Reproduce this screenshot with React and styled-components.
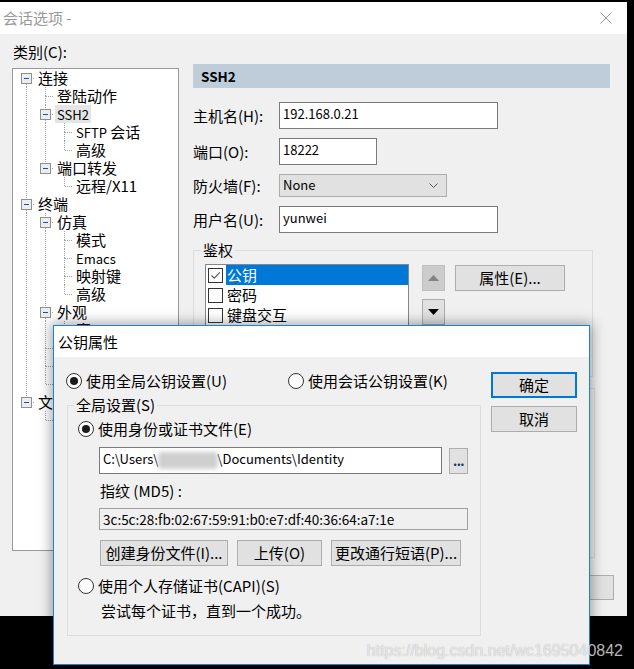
import React from "react";
import styled, { createGlobalStyle } from "styled-components";

const FONT = `"Noto Sans CJK SC", "Noto Sans", sans-serif`;

const GlobalStyle = createGlobalStyle`
  html, body { margin: 0; padding: 0; background: #000; }
  body { font-family: ${FONT}; font-size: 15px; color: #000; }
  * { box-sizing: border-box; }
  button { font-family: ${FONT}; font-size: 15px; color: #000; }
`;

// 左侧类别树（被对话框挡住的节点只留连线）
const TREE = [
  {
    label: "连接",
    children: [
      { label: "登陆动作" },
      { label: "SSH2", latin: true, selected: true, children: [{ label: "SFTP", tail: " 会话" }, { label: "高级" }] },
      { label: "端口转发", children: [{ label: "远程/X11" }] },
    ],
  },
  {
    label: "终端",
    children: [
      {
        label: "仿真",
        children: [{ label: "模式" }, { label: "Emacs", latin: true }, { label: "映射键" }, { label: "高级" }],
      },
      { label: "外观", children: [{ label: "窗口" }] },
      { label: "" },
      { label: "" },
      { label: "" },
    ],
  },
  { label: "文件传输", children: [{ label: "" }] },
];

function flatten(nodes, level = 0, trail = [], out = []) {
  nodes.forEach((n, i) => {
    const last = i === nodes.length - 1;
    out.push({
      ...n,
      level,
      last,
      first: level === 0 && i === 0,
      trail,
      hasKids: !!n.children,
    });
    if (n.children) flatten(n.children, level + 1, [...trail, !last], out);
  });
  return out;
}

const ROWS = flatten(TREE);

const AUTH = [
  { label: "公钥", checked: true, selected: true },
  { label: "密码" },
  { label: "键盘交互" },
];

const DOT = { stroke: "#a0a0a0", strokeDasharray: "1 1" };

function Guide({ through }) {
  return (
    <GuideSvg width="19" height="18">
      {through && <line x1="9.5" y1="0" x2="9.5" y2="18" {...DOT} />}
    </GuideSvg>
  );
}

function Connector({ row }) {
  return (
    <GuideSvg width="19" height="18">
      {!row.first && <line x1="9.5" y1="0" x2="9.5" y2="9" {...DOT} />}
      {!row.last && <line x1="9.5" y1="9" x2="9.5" y2="18" {...DOT} />}
      <line x1="10" y1="9.5" x2="18" y2="9.5" {...DOT} />
      {row.hasKids && (
        <g>
          <rect x="4.5" y="4.5" width="10" height="10" fill="#ededed" stroke="#8f8f8f" />
          <line x1="7" y1="9.5" x2="12" y2="9.5" stroke="#1f4fa3" />
        </g>
      )}
    </GuideSvg>
  );
}

function CloseIcon() {
  return (
    <svg width="12" height="12" viewBox="0 0 12 12">
      <path d="M0.5 0.5 L11.5 11.5 M11.5 0.5 L0.5 11.5" stroke="#9a9a9a" strokeWidth="1" fill="none" />
    </svg>
  );
}

function Radio({ on, children }) {
  return (
    <RadioRow>
      <RadioDot $on={on} />
      <span>{children}</span>
    </RadioRow>
  );
}

export default function App() {
  return (
    <>
      <GlobalStyle />
      <Desktop>
        <Window>
          <TitleBar $h={32} $pl={3} $pr={15}>
            <span>会话选项 -</span>
            <CloseIcon />
          </TitleBar>
          <WindowBody>
            <MainRow>
              <LeftCol>
                <CategoryLabel>类别(C):</CategoryLabel>
                <TreeBox>
                  {ROWS.map((row, i) => (
                    <TreeRow key={i}>
                      {row.trail.map((t, j) => (
                        <Guide key={j} through={t} />
                      ))}
                      <Connector row={row} />
                      <NodeLabel $selected={row.selected}>
                        {row.latin || row.tail ? <Latin>{row.label}</Latin> : row.label}
                        {row.tail}
                      </NodeLabel>
                    </TreeRow>
                  ))}
                </TreeBox>
              </LeftCol>

              <RightCol>
                <SectionHeader>SSH2</SectionHeader>
                <FormGrid>
                  <FieldLabel>主机名(H):</FieldLabel>
                  <TextBox $w={219}><Latin>192.168.0.21</Latin></TextBox>
                  <FieldLabel>端口(O):</FieldLabel>
                  <TextBox $w={98}><Latin>18222</Latin></TextBox>
                  <FieldLabel>防火墙(F):</FieldLabel>
                  <Select>
                    <Latin>None</Latin>
                    <svg width="9" height="5" viewBox="0 0 9 5">
                      <path d="M0.5 0.5 L4.5 4.5 L8.5 0.5" stroke="#555" fill="none" />
                    </svg>
                  </Select>
                  <FieldLabel>用户名(U):</FieldLabel>
                  <TextBox $w={219}><Latin>yunwei</Latin></TextBox>
                </FormGrid>

                <Group $mt={8} $w={400}>
                  <Legend $ml={7}>鉴权</Legend>
                  <AuthBody>
                    <AuthList>
                      {AUTH.map((a) => (
                        <AuthItem key={a.label}>
                          <CheckBox>
                            {a.checked && (
                              <svg width="13" height="13" viewBox="0 0 13 13">
                                <path d="M2.5 6.5 L5.2 9.2 L10.8 3.4" stroke="#555" strokeWidth="1.1" fill="none" />
                              </svg>
                            )}
                          </CheckBox>
                          <AuthText $selected={a.selected}>{a.label}</AuthText>
                        </AuthItem>
                      ))}
                    </AuthList>
                    <ArrowCol>
                      <ArrowBtn $disabled>
                        <svg width="11" height="6" viewBox="0 0 11 6">
                          <path d="M0 6 L5.5 0 L11 6 Z" fill="#838383" />
                        </svg>
                      </ArrowBtn>
                      <ArrowBtn>
                        <svg width="11" height="6" viewBox="0 0 11 6">
                          <path d="M0 0 L5.5 6 L11 0 Z" fill="#000" />
                        </svg>
                      </ArrowBtn>
                    </ArrowCol>
                    <Button $w={110} $h={26} $mt={1}>属性(E)...</Button>
                  </AuthBody>
                </Group>

                <Group $mt={11} $w={402} $h={170} />
              </RightCol>
            </MainRow>

            <Footer>
              <Button $w={86} $h={25} />
            </Footer>
          </WindowBody>
        </Window>

        <Dialog>
          <TitleBar $h={31} $pl={4} $active>
            公钥属性
          </TitleBar>
          <DialogBody>
            <div>
              <ScopeRow>
                <Radio on>使用全局公钥设置(U)</Radio>
                <Radio>使用会话公钥设置(K)</Radio>
              </ScopeRow>

              <Group $mt={6} $ml={1} $w={414}>
                <Legend $ml={6}>全局设置(S)</Legend>
                <GlobalBody>
                  <Radio on>使用身份或证书文件(E)</Radio>
                  <Indented>
                    <PathRow>
                      <TextBox $w={343}>
                        <Latin>C:\Users\</Latin>
                        <Redacted />
                        <Latin>\Documents\Identity</Latin>
                      </TextBox>
                      <BrowseBtn>...</BrowseBtn>
                    </PathRow>
                    <SubLabel>指纹 (MD5) :</SubLabel>
                    <ReadOnlyBox>3c:5c:28:fb:02:67:59:91:b0:e7:df:40:36:64:a7:1e</ReadOnlyBox>
                    <ActionRow>
                      <Button $w={128} $h={26}>创建身份文件(I)...</Button>
                      <Button $w={85} $h={26}>上传(O)</Button>
                      <Button $w={130} $h={26}>更改通行短语(P)...</Button>
                    </ActionRow>
                  </Indented>
                  <CapiRow>
                    <Radio>使用个人存储证书(CAPI)(S)</Radio>
                  </CapiRow>
                  <Hint>尝试每个证书，直到一个成功。</Hint>
                </GlobalBody>
              </Group>
            </div>

            <DialogButtons>
              <Button $w={86} $h={26} $default>确定</Button>
              <Button $w={86} $h={26}>取消</Button>
            </DialogButtons>
          </DialogBody>
        </Dialog>

        <Watermark>https://blog.csdn.net/wc1695040842</Watermark>
      </Desktop>
    </>
  );
}

const Desktop = styled.div`
  position: relative;
  width: 634px;
  height: 669px;
  background: #000;
  overflow: hidden;
`;

const Window = styled.div`
  position: absolute;
  left: 0;
  top: 2px;
  width: 627px;
  height: 614px;
  display: flex;
  flex-direction: column;
  background: #f0f0f0;
`;

const TitleBar = styled.div`
  flex: none;
  height: ${(p) => p.$h}px;
  display: flex;
  align-items: center;
  justify-content: space-between;
  padding: 0 ${(p) => p.$pr || 0}px 0 ${(p) => p.$pl}px;
  background: #fff;
  color: ${(p) => (p.$active ? "#000" : "#999")};
  line-height: 18px;
`;

const WindowBody = styled.div`
  flex: 1;
  display: flex;
  flex-direction: column;
  padding: 0 0 16px 12px;
`;

const MainRow = styled.div`
  display: flex;
  gap: 14px;
`;

const LeftCol = styled.div`
  width: 167px;
  display: flex;
  flex-direction: column;
`;

const CategoryLabel = styled.div`
  margin-top: 9px;
  line-height: 18px;
  padding-left: 1px;
`;

const TreeBox = styled.div`
  margin-top: 7px;
  height: 483px;
  background: #fff;
  border: 1px solid #999;
  padding-left: 4px;
  overflow: hidden;
`;

const TreeRow = styled.div`
  display: flex;
  align-items: center;
  height: 18px;
  white-space: nowrap;
`;

const GuideSvg = styled.svg`
  display: block;
  flex: none;
`;

const NodeLabel = styled.span`
  height: 18px;
  line-height: 18px;
  padding: 0 2px;
  background: ${(p) => (p.$selected ? "#e5e5e5" : "transparent")};
`;

// 纯西文部分比中文字号略小，贴近原图的字宽
const Latin = styled.span`
  font-size: 13px;
`;

const RightCol = styled.div`
  width: 417px;
  margin-top: 30px;
  display: flex;
  flex-direction: column;
`;

const SectionHeader = styled.div`
  height: 24px;
  line-height: 24px;
  padding-left: 8px;
  background: #bfcddb;
  font-weight: 700;
  font-size: 13.5px;
`;

const FormGrid = styled.div`
  margin-top: 14px;
  display: grid;
  grid-template-columns: 86px auto;
  row-gap: 9px;
  align-items: center;
  justify-items: start;
`;

const FieldLabel = styled.div`
  line-height: 18px;
`;

const TextBox = styled.div`
  width: ${(p) => p.$w}px;
  height: 27px;
  display: flex;
  align-items: center;
  padding: 0 3px 4px;
  background: #fff;
  border: 1px solid #7a7a7a;
  line-height: 18px;
  white-space: nowrap;
  overflow: hidden;
`;

const Select = styled.div`
  width: 168px;
  height: 23px;
  display: flex;
  align-items: center;
  justify-content: space-between;
  padding: 0 8px 1px 3px;
  background: #e1e1e1;
  border: 1px solid #adadad;
  line-height: 18px;
`;

const Group = styled.fieldset`
  margin: ${(p) => p.$mt || 0}px 0 0 ${(p) => p.$ml || 0}px;
  padding: 0;
  min-width: 0;
  width: ${(p) => p.$w}px;
  ${(p) => (p.$h ? `height: ${p.$h}px;` : "")}
  border: 1px solid #dcdcdc;
`;

const Legend = styled.legend`
  margin-left: ${(p) => p.$ml}px;
  padding: 0 2px;
  line-height: 18px;
`;

const AuthBody = styled.div`
  display: flex;
  align-items: flex-start;
  padding: 5px 0 10px 11px;
`;

const AuthList = styled.div`
  width: 204px;
  height: 102px;
  padding-left: 2px;
  background: #fff;
  border: 1px solid #828790;
  overflow: hidden;
`;

const AuthItem = styled.div`
  display: flex;
  align-items: center;
  height: 20px;
`;

const CheckBox = styled.span`
  flex: none;
  width: 15px;
  height: 15px;
  margin-right: 3px;
  display: flex;
  align-items: center;
  justify-content: center;
  background: #fff;
  border: 1px solid #333;
`;

const AuthText = styled.span`
  flex: 1;
  height: 20px;
  line-height: 20px;
  padding-left: 1px;
  background: ${(p) => (p.$selected ? "#0078d7" : "transparent")};
  color: ${(p) => (p.$selected ? "#fff" : "#000")};
`;

const ArrowCol = styled.div`
  margin: 1px 10px 0 13px;
  display: flex;
  flex-direction: column;
  gap: 8px;
`;

const ArrowBtn = styled.div`
  width: 23px;
  height: 26px;
  display: flex;
  align-items: center;
  justify-content: center;
  background: ${(p) => (p.$disabled ? "#cccccc" : "#e1e1e1")};
  border: 1px solid ${(p) => (p.$disabled ? "#bfbfbf" : "#adadad")};
`;

const Button = styled.button`
  flex: none;
  width: ${(p) => p.$w}px;
  height: ${(p) => p.$h}px;
  margin: ${(p) => p.$mt || 0}px 0 0;
  padding: 0;
  background: #e1e1e1;
  border: ${(p) => (p.$default ? "2px solid #0078d7" : "1px solid #adadad")};
  line-height: 18px;
  white-space: nowrap;
`;

const Footer = styled.div`
  margin-top: auto;
  display: flex;
  justify-content: flex-end;
  padding-right: 13px;
`;

const Dialog = styled.div`
  position: absolute;
  left: 53px;
  top: 325px;
  width: 537px;
  height: 340px;
  display: flex;
  flex-direction: column;
  border: 1px solid #1883d7;
  background: #f0f0f0;
  box-shadow: 0 0 12px 2px rgba(0, 0, 0, 0.35);
`;

const DialogBody = styled.div`
  flex: 1;
  display: grid;
  grid-template-columns: 415px 86px;
  column-gap: 10px;
  align-items: start;
  padding: 15px 12px 0 12px;
`;

const ScopeRow = styled.div`
  display: grid;
  grid-template-columns: 222px auto;
`;

const RadioRow = styled.div`
  display: flex;
  align-items: center;
  gap: 4px;
  height: 18px;
  line-height: 18px;
  white-space: nowrap;
`;

const RadioDot = styled.span`
  flex: none;
  width: 16px;
  height: 16px;
  border-radius: 50%;
  border: 1px solid #333;
  background: #fff;
  display: flex;
  align-items: center;
  justify-content: center;

  &::after {
    content: "";
    width: 8px;
    height: 8px;
    border-radius: 50%;
    background: ${(p) => (p.$on ? "#1a1a1a" : "transparent")};
  }
`;

const GlobalBody = styled.div`
  padding: 6px 0 15px 10px;
`;

const Indented = styled.div`
  padding-left: 21px;
`;

const PathRow = styled.div`
  margin-top: 9px;
  display: flex;
  align-items: flex-start;
  gap: 7px;
`;

const Redacted = styled.span`
  display: inline-block;
  flex: none;
  width: 60px;
  height: 17px;
  margin: 4px -1px 0 0;
  background: #cfcfcf;
  border-radius: 4px;
  filter: blur(2px);
`;

const BrowseBtn = styled.div`
  width: 19px;
  height: 26px;
  margin-top: 1px;
  display: flex;
  align-items: center;
  justify-content: center;
  padding-bottom: 2px;
  background: #e1e1e1;
  border: 1px solid #adadad;
  color: #1c2f66;
  font-weight: 700;
  font-size: 13px;
  letter-spacing: -0.5px;
`;

const SubLabel = styled.div`
  margin-top: 8px;
  padding-left: 1px;
  line-height: 18px;
`;

const ReadOnlyBox = styled.div`
  margin-top: 8px;
  width: 369px;
  height: 22px;
  display: flex;
  align-items: center;
  padding: 0 3px 1px;
  border: 1px solid #a0a0a0;
  background: #f0f0f0;
  line-height: 18px;
  font-size: 13.5px;
`;

const ActionRow = styled.div`
  margin-top: 10px;
  padding-left: 1px;
  display: flex;
  gap: 9px;
`;

const CapiRow = styled.div`
  margin-top: 11px;
`;

const Hint = styled.div`
  margin-top: 7px;
  padding-left: 23px;
  line-height: 18px;
`;

const DialogButtons = styled.div`
  display: flex;
  flex-direction: column;
  gap: 8px;
`;

const Watermark = styled.div`
  position: absolute;
  right: 11px;
  top: 641px;
  font-family: "Liberation Sans", Arial, sans-serif;
  font-size: 16px;
  line-height: 20px;
  color: rgba(255, 255, 255, 0.72);
  text-shadow: 0 0 1px rgba(0, 0, 0, 0.35);
  pointer-events: none;
`;
